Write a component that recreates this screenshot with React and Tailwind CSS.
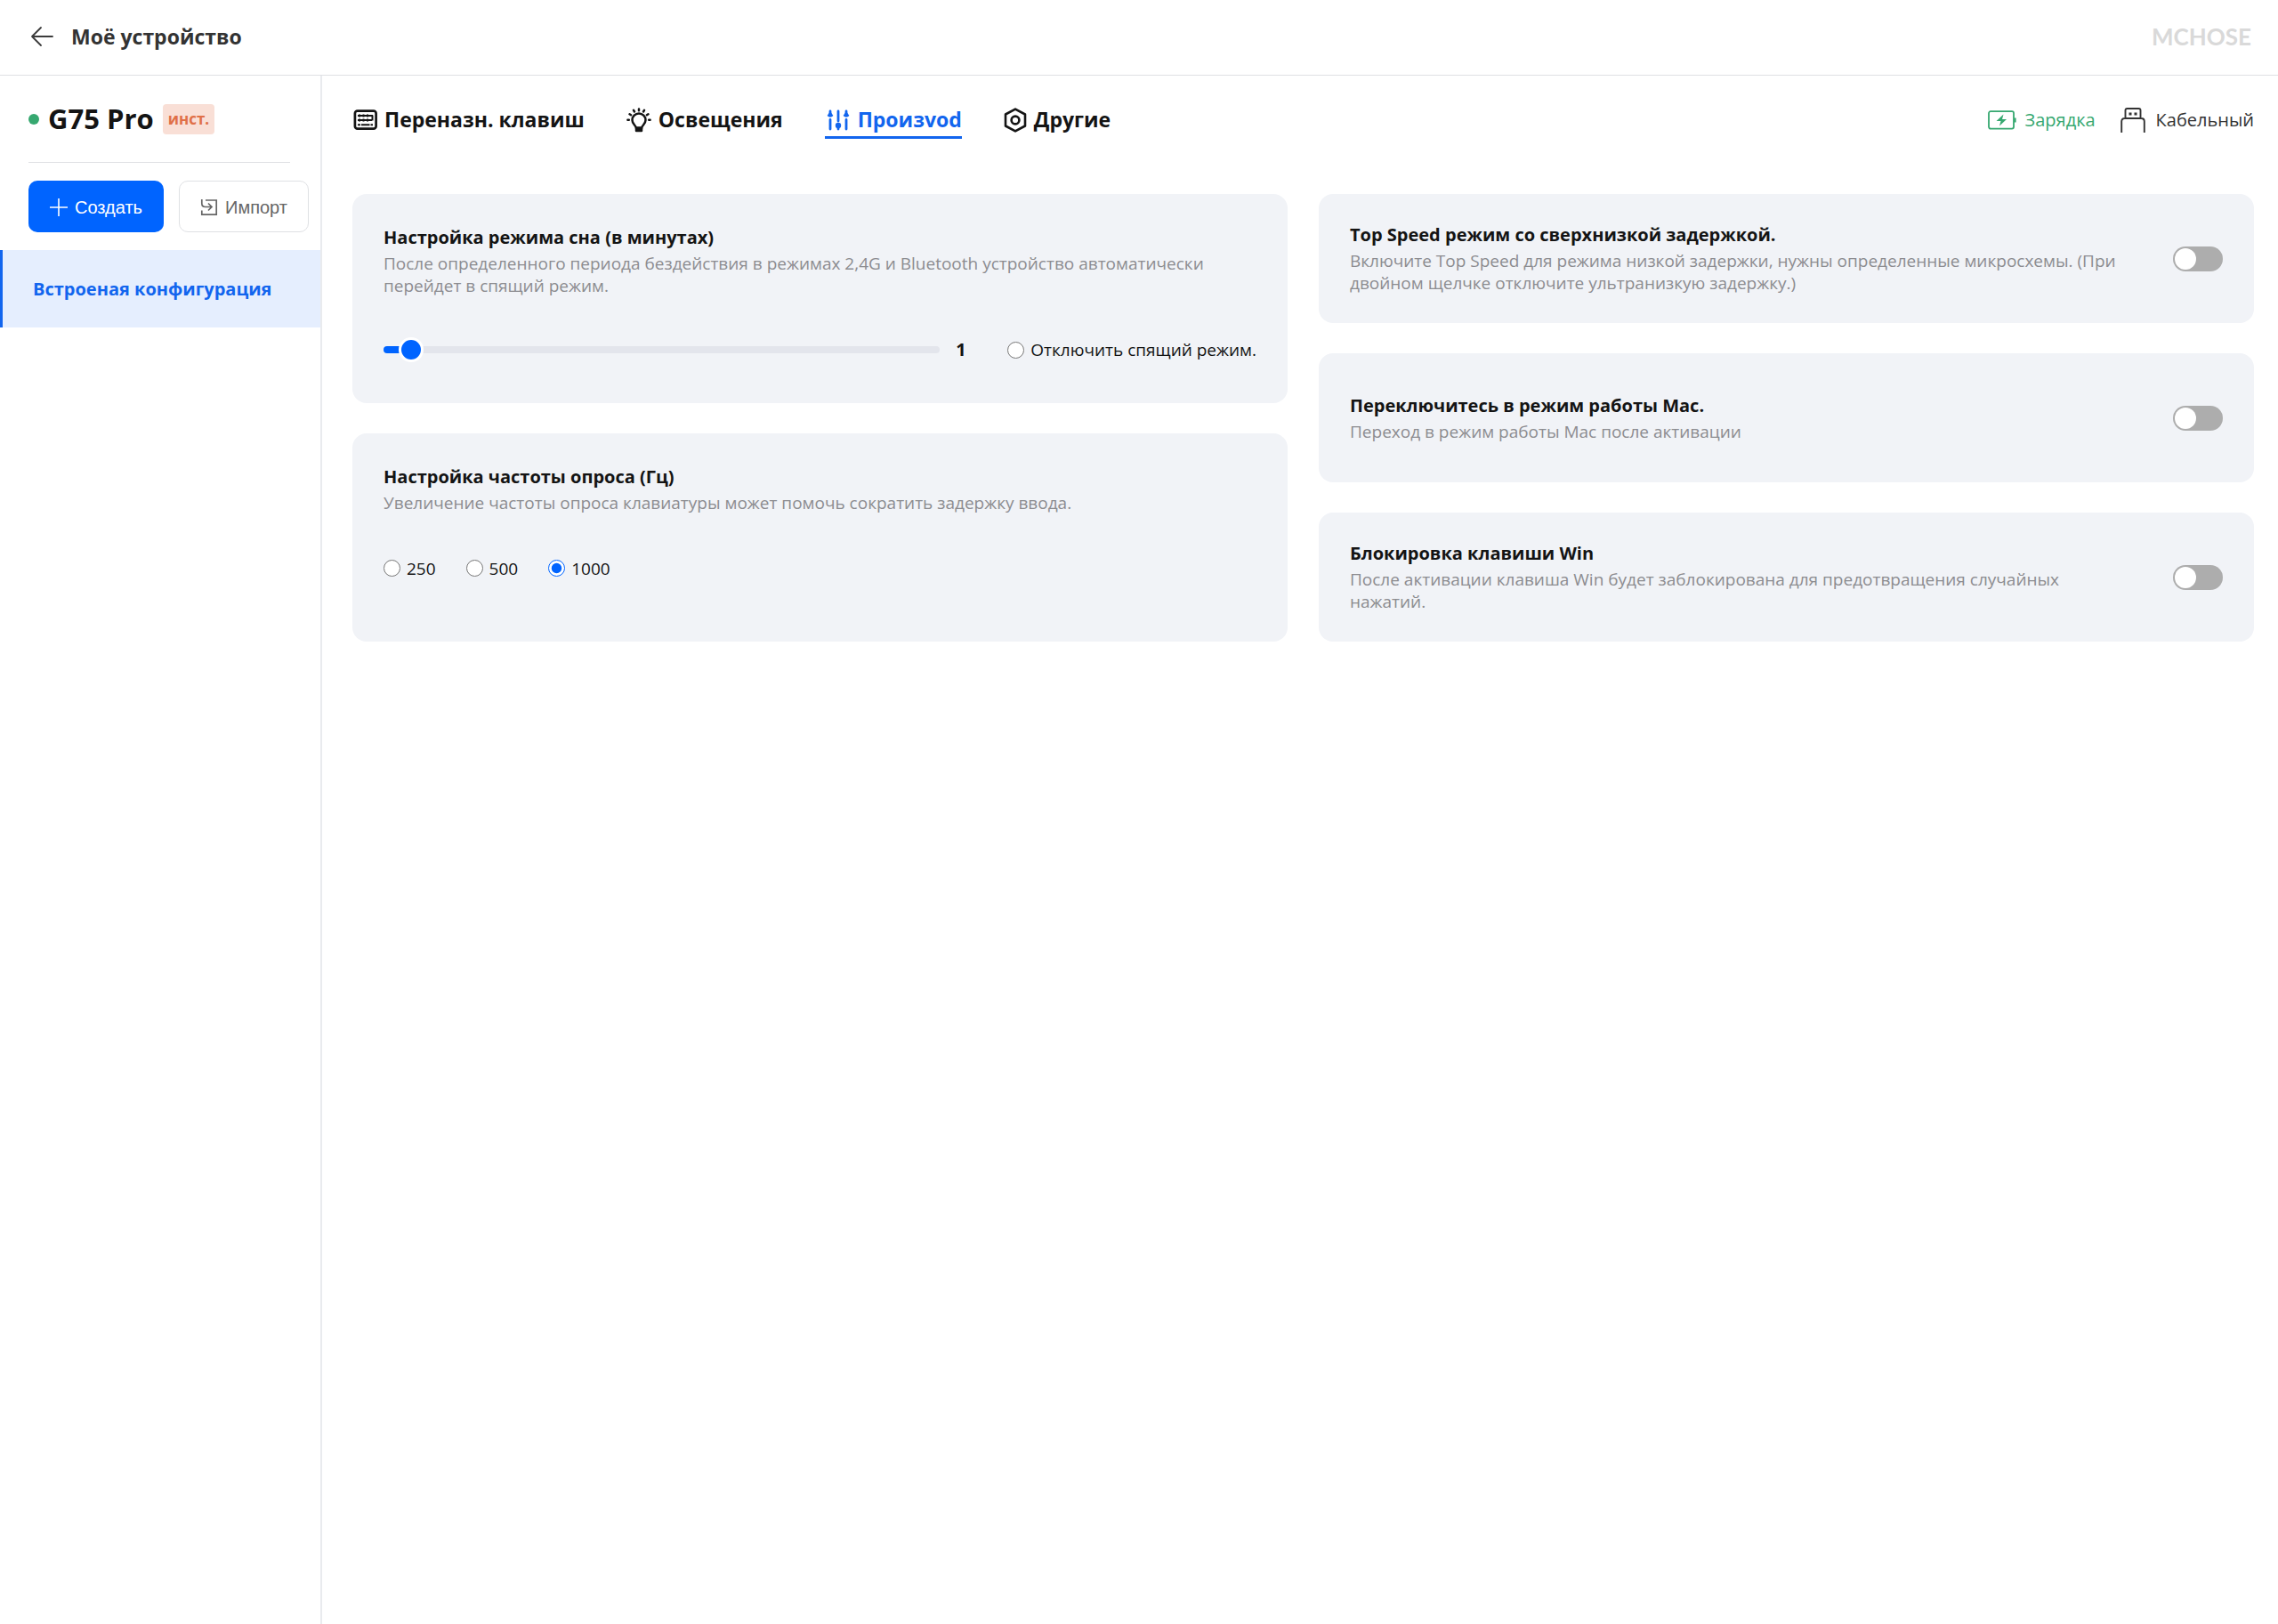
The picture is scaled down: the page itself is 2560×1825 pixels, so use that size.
import { useState } from "react";

const tabs = [
  { id: "keys", label: "Переназн. клавиш", Icon: KeyboardIcon },
  { id: "light", label: "Освещения", Icon: BulbIcon },
  { id: "perf", label: "Произvod", Icon: SlidersIcon },
  { id: "other", label: "Другие", Icon: HexIcon },
];

const MAX_SLEEP = 36;

function ArrowIcon() {
  return (
    <svg width="26" height="24" viewBox="0 0 26 24" fill="none" stroke="#3c3c3c" strokeWidth="1.8" strokeLinecap="round" strokeLinejoin="round" aria-hidden="true">
      <path d="M12 2 2 12l10 10M2 12h23" />
    </svg>
  );
}

function PlusIcon() {
  return (
    <svg width="20" height="20" viewBox="0 0 20 20" fill="none" stroke="currentColor" strokeWidth="1.6" aria-hidden="true">
      <path d="M10 0v20M0 10h20" />
    </svg>
  );
}

function ImportIcon() {
  return (
    <svg width="20" height="20" viewBox="0 0 20 20" fill="none" stroke="currentColor" strokeWidth="1.7" aria-hidden="true">
      <path d="M6 2h12.2v16.2H1.8V13.5M1.8 1v4.500q0 4 4 4H12.500M9 5.500l4 4-4 4" />
    </svg>
  );
}

function KeyboardIcon() {
  return (
    <svg width="28" height="24" viewBox="0 0 28 24" fill="none" stroke="currentColor" aria-hidden="true">
      <rect x="2.900" y="1.700" width="23.700" height="20" rx="2.800" strokeWidth="2.700" />
      <path d="M6 7h17M6 12h16M22.500 6.500v6M6 17.300h3M10 17.300h9.500M20.500 17.300H23" strokeWidth="2" />
      <path d="M8 5.500v3M12.500 5.500v3M17 5.500v3M8 10.500v3M12.500 10.500v3M17 10.500v3" strokeWidth="2" />
    </svg>
  );
}

function BulbIcon() {
  return (
    <svg width="28" height="28" viewBox="0 0 28 28" fill="none" stroke="currentColor" strokeWidth="2.500" strokeLinecap="round" strokeLinejoin="round" aria-hidden="true">
      <path d="M10.700 22.500c0-2.600-4.200-4-4.200-8.500a7.500 7.500 0 0 1 15 0c0 4.500-4.200 5.900-4.200 8.500z" />
      <path d="M11 23.500h6v2.500h-6z" fill="currentColor" />
      <path d="M14 1.500v1.700M8 2.800l1 1.700M20 2.800l-1 1.700M3.500 7.300l1.600 1M24.500 7.300l-1.600 1M1.400 13.800h1.400M25.200 13.800h1.400" />
    </svg>
  );
}

function SlidersIcon() {
  return (
    <svg width="29" height="24" viewBox="-2 0 29 24" fill="none" stroke="currentColor" strokeWidth="2.800" strokeLinecap="round" aria-hidden="true">
      <path d="M4 2v4M4 11.500V22M13 2v11M13 21v1M22 2v4M22 11.500V22" />
      <g fill="currentColor" stroke="none">
        <path d="M4 2 7.400 7Q4 10.500 .6 7zM22 2 25.400 7Q22 10.500 18.600 7z" />
        <circle cx="13" cy="18" r="3.200" />
      </g>
    </svg>
  );
}

function HexIcon() {
  return (
    <svg width="26" height="28" viewBox="0 0 26 28" fill="none" stroke="currentColor" strokeWidth="2.600" strokeLinejoin="round" aria-hidden="true">
      <path d="M13 1.600 24 7.500v13L13 26.400 2 20.500v-13z" />
      <circle cx="13" cy="14" r="4.400" />
    </svg>
  );
}

function BatteryIcon() {
  return (
    <svg width="32" height="22" viewBox="0 0 32 22" fill="none" stroke="currentColor" strokeWidth="1.800" aria-hidden="true">
      <rect x="1" y="1.200" width="28" height="19.400" rx="2" />
      <path d="M30.500 8.500v5" strokeWidth="2.200" />
      <path d="M17.500 4.500 9.500 12h5l-1.500 5.500 8-7.500h-5z" fill="currentColor" stroke="none" />
    </svg>
  );
}

function UsbIcon() {
  return (
    <svg width="28" height="28" viewBox="0 0 28 28" fill="none" stroke="currentColor" strokeWidth="1.900" aria-hidden="true">
      <path d="M5.500 12V3q0-2 2-2h13q2 0 2 2v9M1.200 28V15.500q0-3.500 3.500-3.500h18.600q3.500 0 3.500 3.500V28" />
      <path d="M9.500 5.500h3v3h-3zM15.500 5.500h3v3h-3z" fill="currentColor" stroke="none" />
    </svg>
  );
}

function CardText({ title, children }) {
  return (
    <div>
      <h2 className="text-xl leading-7 font-bold text-[#141414]">{title}</h2>
      <p className="mt-[3px] text-[19px] leading-[25px] text-[#8c8c90]">{children}</p>
    </div>
  );
}

function ToggleCard({ title, text }) {
  const [on, setOn] = useState(false);
  return (
    <section className="flex min-h-[145px] items-center justify-between gap-[52px] rounded-2xl bg-[#f1f3f7] px-[35px] py-4">
      <CardText title={title}>{text}</CardText>
      <button
        type="button"
        role="switch"
        aria-checked={on}
        aria-label={title}
        onClick={() => setOn(!on)}
        className={`flex h-7 w-14 shrink-0 items-center rounded-full p-0.5 ${on ? "justify-end bg-[#0064ff]" : "justify-start bg-[#adadad]"}`}
      >
        <span className="size-6 rounded-full bg-white" />
      </button>
    </section>
  );
}

function Radio({ label, ...props }) {
  return (
    <label className="flex items-center gap-[7px] text-[19px] leading-7 whitespace-nowrap text-[#141414]">
      <input type="radio" className="size-[19px] accent-[#0064ff]" {...props} />
      {label}
    </label>
  );
}

export default function App() {
  const [tab, setTab] = useState("perf");
  const [sleep, setSleep] = useState(1);
  const [rate, setRate] = useState("1000");
  const [noSleep, setNoSleep] = useState(false);
  const fill = `calc(14px + (100% - 28px) * ${sleep / MAX_SLEEP})`;

  return (
    <div className="flex min-h-screen flex-col bg-white font-['Open_Sans','Noto_Sans',sans-serif] text-[#141414]">
      <header className="flex h-[85px] items-center justify-between border-b border-[#dfe1e4] pr-[30px] pb-0.5 pl-[34px]">
        <button type="button" className="flex items-center gap-5 text-[23px] font-bold text-[#333]">
          <ArrowIcon />
          Моё устройство
        </button>
        <span className="font-['Lato',sans-serif] text-[26px] font-bold text-[#d9d9d9]">MCHOSE</span>
      </header>

      <div className="flex flex-1">
        <aside className="w-[362px] shrink-0 border-r-2 border-[#e9ebee]">
          <div className="mr-[34px] ml-8 flex h-[98px] items-center border-b border-[#dfe1e4]">
            <span className="size-3 rounded-full bg-[#36a870]" />
            <h1 className="ml-2.5 text-[31px] font-bold">G75 Pro</h1>
            <span className="ml-2.5 rounded bg-[#f9dfd6] px-1.5 text-[17px] leading-[34px] font-bold text-[#e07048]">инст.</span>
          </div>
          <div className="mt-5 flex gap-[17px] pl-8 font-['Liberation_Sans',sans-serif] text-xl">
            <button type="button" className="flex h-[58px] w-[152px] items-center justify-center gap-2 rounded-[10px] bg-[#0064ff] pt-0.5 text-white">
              <PlusIcon />
              Создать
            </button>
            <button type="button" className="flex h-[58px] w-[146px] items-center justify-center gap-2 rounded-[10px] border border-[#dfe1e4] pt-0.5 text-[#666]">
              <ImportIcon />
              Импорт
            </button>
          </div>
          <button type="button" className="mt-5 flex h-[87px] w-full items-center border-l-3 border-[#1265ee] bg-[#e5eefe] pl-[34px] text-xl font-bold text-[#1265ee]">
            Встроеная конфигурация
          </button>
        </aside>

        <main className="min-w-0 flex-1 pr-[27px] pl-[34px]">
          <div className="flex h-[100px] items-center justify-between">
            <nav className="flex gap-[47px]">
              {tabs.map(({ id, label, Icon }) => (
                <button
                  key={id}
                  type="button"
                  onClick={() => setTab(id)}
                  className={`flex h-[42px] items-center gap-2 border-b-3 pt-0.5 text-[23px] font-bold ${tab === id ? "border-[#1265ee] text-[#1265ee]" : "border-transparent"}`}
                >
                  <Icon />
                  {label}
                </button>
              ))}
            </nav>
            <div className="flex items-center gap-7 text-xl">
              <span className="flex items-center gap-2.5 text-[#36a870]">
                <BatteryIcon />
                Зарядка
              </span>
              <span className="flex items-center gap-3 text-[#333]">
                <UsbIcon />
                Кабельный
              </span>
            </div>
          </div>

          <div className="mt-[33px] grid grid-cols-2 gap-x-[35px]">
            <div className="flex flex-col gap-[34px]">
              <section className="flex-1 rounded-2xl bg-[#f1f3f7] px-[35px] pt-[35px]">
                <CardText title="Настройка режима сна (в минутах)">
                  После определенного периода бездействия в режимах 2,4G и Bluetooth устройство автоматически перейдет в спящий режим.
                </CardText>
                <div className="mt-[45px] flex items-center">
                  <input
                    type="range"
                    min="0"
                    max={MAX_SLEEP}
                    value={sleep}
                    aria-label="Минуты до режима сна"
                    onChange={(e) => setSleep(Number(e.target.value))}
                    style={{ background: `linear-gradient(to right, #0064ff ${fill}, #e3e5ec ${fill})` }}
                    className="h-2 min-w-0 flex-1 appearance-none rounded-full [&::-webkit-slider-thumb]:size-7 [&::-webkit-slider-thumb]:appearance-none [&::-webkit-slider-thumb]:rounded-full [&::-webkit-slider-thumb]:border-3 [&::-webkit-slider-thumb]:border-white [&::-webkit-slider-thumb]:bg-[#0064ff]"
                  />
                  <output className="ml-[18px] w-[58px] text-xl leading-7 font-bold">{sleep}</output>
                  <Radio label="Отключить спящий режим." name="nosleep" checked={noSleep} onChange={() => setNoSleep(true)} />
                </div>
              </section>
              <section className="flex-1 rounded-2xl bg-[#f1f3f7] px-[35px] pt-[35px]">
                <CardText title="Настройка частоты опроса (Гц)">
                  Увеличение частоты опроса клавиатуры может помочь сократить задержку ввода.
                </CardText>
                <div className="mt-[47px] flex gap-[34px]">
                  {["250", "500", "1000"].map((v) => (
                    <Radio key={v} label={v} name="rate" checked={rate === v} onChange={() => setRate(v)} />
                  ))}
                </div>
              </section>
            </div>
            <div className="flex flex-col gap-[34px]">
              <ToggleCard
                title="Top Speed режим со сверхнизкой задержкой."
                text="Включите Top Speed для режима низкой задержки, нужны определенные микросхемы. (При двойном щелчке отключите ультранизкую задержку.)"
              />
              <ToggleCard title="Переключитесь в режим работы Mac." text="Переход в режим работы Mac после активации" />
              <ToggleCard
                title="Блокировка клавиши Win"
                text="После активации клавиша Win будет заблокирована для предотвращения случайных нажатий."
              />
            </div>
          </div>
        </main>
      </div>
    </div>
  );
}
